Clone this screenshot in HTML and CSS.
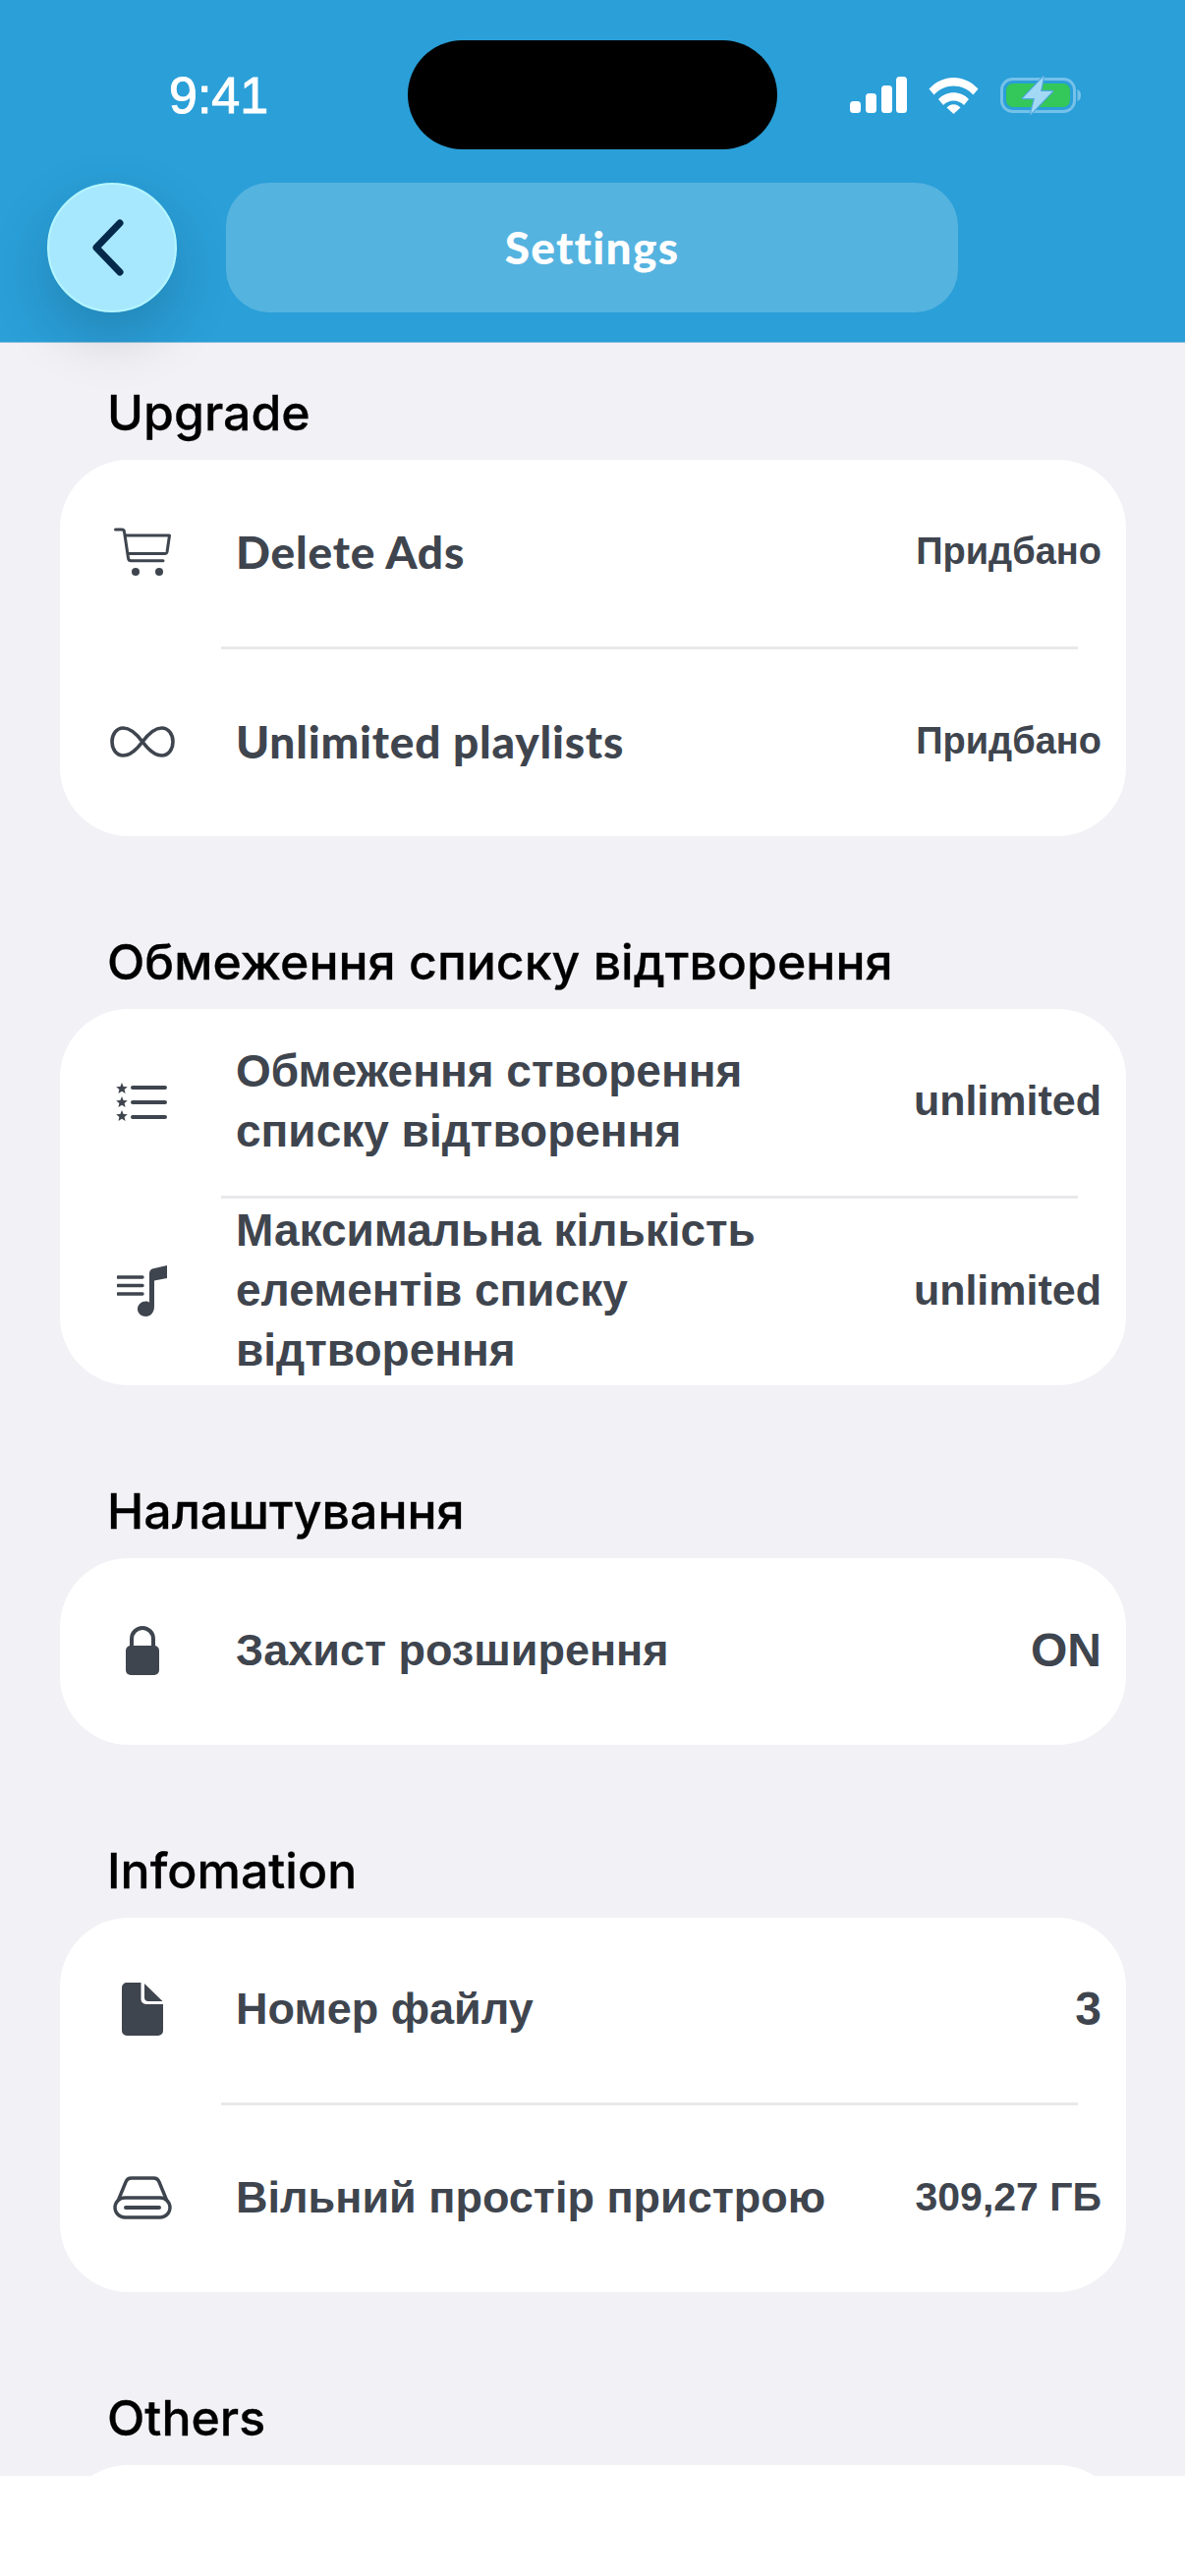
FILE: index.html
```html
<!DOCTYPE html>
<html lang="en">
<head>
  <meta charset="UTF-8">
  <meta name="viewport" content="width=device-width, initial-scale=1.0">
  <title>Settings</title>
  <link rel="stylesheet" href="styles.css">
</head>
<body>
  <div class="screen">
    <!-- Blue header with status bar and nav -->
    <header class="header">
      <div class="status-bar">
        <span class="clock">9:41</span>
        <div class="island"></div>
        <div class="status-icons">
          <svg class="icon-signal" width="58" height="37" viewBox="0 0 58 37">
            <rect x="0" y="25" width="11" height="12" rx="3.5"/>
            <rect x="16" y="17" width="11" height="20" rx="3.5"/>
            <rect x="32" y="9" width="11" height="28" rx="3.5"/>
            <rect x="47" y="0" width="11" height="37" rx="3.5"/>
          </svg>
          <svg class="icon-wifi" width="51" height="38" viewBox="0 0 51 38">
            <path d="M0.5 12.5 C14 -3 37 -3 50.5 12.5 L45.5 18.5 C34.5 6.5 16.5 6.5 5.5 18.5Z"/>
            <path d="M10 23 C18 14 33 14 41 23 L36 29 C30.5 23 20.5 23 15 29Z"/>
            <path d="M18.5 31.5 C22.5 27 28.5 27 32.5 31.5 L25.5 38Z"/>
          </svg>
          <svg class="icon-battery" width="82" height="40" viewBox="0 0 82 40">
            <rect x="1.5" y="3.5" width="74" height="33" rx="11" fill="none" stroke="#75c1e9" stroke-width="3"/>
            <rect x="6" y="8" width="65" height="24" rx="7" fill="#34c759"/>
            <path d="M78.5 14 C81 15 82 17 82 20 C82 23 81 25 78.5 26Z" fill="#75c1e9"/>
            <path d="M44 1 L23 23 H35 L31 39 L53 16 H41Z" fill="#a3d9f5" stroke="#4fa9de" stroke-width="2.5" stroke-linejoin="round" paint-order="stroke"/>
          </svg>
        </div>
      </div>
      <nav class="nav">
        <button class="back-btn" type="button">
          <svg width="34" height="58" viewBox="0 0 34 58">
            <path d="M29 4 L5 29 L29 54" fill="none" stroke="#04294a" stroke-width="7" stroke-linecap="round" stroke-linejoin="round"/>
          </svg>
        </button>
        <div class="title-pill">Settings</div>
      </nav>
    </header>

    <main class="content">
      <section class="section">
        <h2 class="section-title">Upgrade</h2>
        <div class="card">
          <div class="row">
            <div class="row-icon">
              <svg width="58" height="50" viewBox="0 0 58 50">
                <path d="M1.5 2 H8 a2.5 2.5 0 0 1 2.5 2.2 L14.5 31 a3 3 0 0 0 3 2.8 H50" fill="none" stroke="#3f454e" stroke-width="3" stroke-linecap="round"/>
                <path d="M11.5 8 H56.5 L54 25 a2 2 0 0 1 -2 1.5 H14" fill="none" stroke="#3f454e" stroke-width="3" stroke-linejoin="round"/>
                <circle cx="22" cy="45" r="4" fill="#3f454e"/>
                <circle cx="46" cy="45" r="4" fill="#3f454e"/>
              </svg>
            </div>
            <div class="row-label label-avenir">Delete Ads</div>
            <div class="row-value value-sm">Придбано</div>
          </div>
          <div class="divider"></div>
          <div class="row">
            <div class="row-icon">
              <svg width="66" height="32" viewBox="0 0 66 32">
                <path d="M33 16 C27 8 21 2 13.5 2 C6.5 2 2 8.5 2 16 C2 23.5 6.5 30 13.5 30 C21 30 27 24 33 16 C39 8 45 2 52.5 2 C59.5 2 64 8.5 64 16 C64 23.5 59.5 30 52.5 30 C45 30 39 24 33 16Z" fill="none" stroke="#3f454e" stroke-width="3.6"/>
              </svg>
            </div>
            <div class="row-label label-avenir">Unlimited playlists</div>
            <div class="row-value value-sm">Придбано</div>
          </div>
        </div>
      </section>

      <section class="section">
        <h2 class="section-title">Обмеження списку відтворення</h2>
        <div class="card">
          <div class="row">
            <div class="row-icon">
              <svg width="54" height="40" viewBox="0 0 54 40">
                <path d="M6 0 L7.6 3.9 L11.8 4.2 L8.6 6.9 L9.6 11 L6 8.8 L2.4 11 L3.4 6.9 L0.2 4.2 L4.4 3.9Z" fill="#3f454e" transform="translate(0 1)"/>
                <path d="M6 0 L7.6 3.9 L11.8 4.2 L8.6 6.9 L9.6 11 L6 8.8 L2.4 11 L3.4 6.9 L0.2 4.2 L4.4 3.9Z" fill="#3f454e" transform="translate(0 15)"/>
                <path d="M6 0 L7.6 3.9 L11.8 4.2 L8.6 6.9 L9.6 11 L6 8.8 L2.4 11 L3.4 6.9 L0.2 4.2 L4.4 3.9Z" fill="#3f454e" transform="translate(0 29)"/>
                <path d="M17 6 H50 M17 21 H50 M17 36 H50" stroke="#3f454e" stroke-width="4" stroke-linecap="round"/>
              </svg>
            </div>
            <div class="row-label label-wide">Обмеження створення списку відтворення</div>
            <div class="row-value value-md">unlimited</div>
          </div>
          <div class="divider"></div>
          <div class="row">
            <div class="row-icon">
              <svg width="52" height="52" viewBox="0 0 52 52">
                <path d="M1 12 H26 M1 20.5 H26 M1 29 H26" stroke="#3f454e" stroke-width="3.4" stroke-linecap="round"/>
                <path d="M33 8 C33 5 35 3.5 38 3 L51 0 V13 L38 15.5 V42 C38 48 34 52 29.5 52 C25 52 21 49 21 44.5 C21 40 25 36.5 29.5 36.5 C31 36.5 32 37 33 37.5Z" fill="#3f454e"/>
              </svg>
            </div>
            <div class="row-label label-wide">Максимальна кількість елементів списку відтворення</div>
            <div class="row-value value-md">unlimited</div>
          </div>
        </div>
      </section>

      <section class="section">
        <h2 class="section-title">Налаштування</h2>
        <div class="card">
          <div class="row">
            <div class="row-icon">
              <svg width="34" height="50" viewBox="0 0 34 50">
                <path d="M6 22 V13 a11 11 0 0 1 22 0 V22" fill="none" stroke="#3f454e" stroke-width="4"/>
                <rect x="0" y="20" width="34" height="30" rx="5" fill="#3f454e"/>
              </svg>
            </div>
            <div class="row-label">Захист розширення</div>
            <div class="row-value">ON</div>
          </div>
        </div>
      </section>

      <section class="section">
        <h2 class="section-title">Infomation</h2>
        <div class="card">
          <div class="row row-short">
            <div class="row-icon">
              <svg width="42" height="54" viewBox="0 0 42 54">
                <path d="M5 0 H19.5 V17 a5 5 0 0 0 5 5 H42 V49 a5 5 0 0 1 -5 5 H5 a5 5 0 0 1 -5 -5 V5 a5 5 0 0 1 5 -5Z" fill="#3f454e"/>
                <path d="M23 1 L41.5 19 H27 a4 4 0 0 1 -4 -4Z" fill="#3f454e"/>
              </svg>
            </div>
            <div class="row-label">Номер файлу</div>
            <div class="row-value">3</div>
          </div>
          <div class="divider"></div>
          <div class="row">
            <div class="row-icon">
              <svg width="60" height="44" viewBox="0 0 60 44">
                <path d="M3.5 29 L13 6 a6 6 0 0 1 5.5 -4 H41.5 a6 6 0 0 1 5.5 4 L56.5 29" fill="none" stroke="#3f454e" stroke-width="3.4" stroke-linejoin="round"/>
                <rect x="2" y="22" width="56" height="20" rx="10" fill="#fff" stroke="#3f454e" stroke-width="3.4"/>
                <path d="M13 32 H47" stroke="#3f454e" stroke-width="4" stroke-linecap="round"/>
              </svg>
            </div>
            <div class="row-label">Вільний простір пристрою</div>
            <div class="row-value value-md2">309,27 ГБ</div>
          </div>
        </div>
      </section>

      <section class="section">
        <h2 class="section-title">Others</h2>
        <div class="card card-cut"></div>
      </section>
    </main>

    <!-- Blank strip along the bottom edge -->
    <div class="bottom-strip"></div>
  </div>
</body>
</html>
```

FILE: styles.css
```css
/* Reset */
* {
  margin: 0;
  padding: 0;
  box-sizing: border-box;
}

body {
  background-color: #fff;
  font-family: "Liberation Sans", Arial, sans-serif;
}

.screen {
  display: flex;
  flex-direction: column;
  width: 1206px;
  height: 2622px;
  overflow: hidden;
}

/* Header */
.header {
  position: relative;
  z-index: 1;
  flex: none;
  height: 349px;
  padding-top: 41px;
  background-color: #2a9fd8;
  border-bottom: 1px solid #8fc0dc;
}

.status-bar {
  display: grid;
  grid-template-columns: 1fr 376px 1fr;
  align-items: center;
  height: 111px;
}

.clock {
  padding-left: 172px;
  color: #fff;
  font-size: 52px;
  -webkit-text-stroke: 1px #fff;
}

.island {
  height: 111px;
  background-color: #000;
  border-radius: 56px;
}

.status-icons {
  display: flex;
  align-items: center;
  justify-content: flex-end;
  gap: 22px;
  padding-right: 106px;
}

.icon-signal,
.icon-wifi {
  fill: #fff;
}

.nav {
  display: flex;
  gap: 50px;
  margin-top: 34px;
  padding-left: 48px;
}

.back-btn {
  display: flex;
  align-items: center;
  justify-content: center;
  width: 132px;
  height: 132px;
  padding-right: 8px;
  background-color: #a8e8ff;
  border: 2px solid #b4f6ff;
  border-radius: 50%;
  box-shadow: 0 24px 60px rgba(0, 0, 0, 0.17);
}

.title-pill {
  display: flex;
  align-items: center;
  justify-content: center;
  width: 745px;
  height: 132px;
  padding-bottom: 2px;
  background-color: #55b3e0;
  border-radius: 44px;
  color: #fff;
  font-family: Lato, sans-serif;
  font-size: 46px;
  font-weight: 900;
  letter-spacing: 1.3px;
}

/* Settings list */
.content {
  flex: 1;
  min-height: 0;
  overflow: hidden;
  background-color: #f1f1f6;
  padding: 41px 60px 0 61px;
}

.section {
  margin-bottom: 98px;
}

.section-title {
  height: 60px;
  margin-bottom: 18px;
  padding-left: 48px;
  color: #000;
  font-family: Inter, sans-serif;
  font-size: 50px;
  font-weight: 500;
  line-height: 60px;
  -webkit-text-stroke: 0.3px #000;
}

.card {
  background-color: #fff;
  border-radius: 70px;
}

.card-cut {
  height: 300px;
}

.row {
  display: flex;
  align-items: center;
  min-height: 190px;
  padding: 0 25px 3px 51px;
  color: #3f454e;
}

.row-short {
  min-height: 188px;
}

.row-icon {
  display: flex;
  flex: none;
  align-items: center;
  justify-content: center;
  width: 66px;
  margin-right: 62px;
}

.row-label {
  flex: 1;
  max-width: 640px;
  font-size: 45px;
  font-weight: 700;
  line-height: 61px;
}

.label-wide {
  font-size: 46px;
}

.label-avenir {
  font-family: Lato, sans-serif;
  font-size: 46px;
  font-weight: 900;
  letter-spacing: 0.8px;
}

.row-value {
  margin-left: auto;
  font-size: 48px;
  font-weight: 700;
  white-space: nowrap;
}

.value-sm {
  font-size: 38px;
}

.value-md {
  font-size: 43px;
}

.value-md2 {
  font-size: 41px;
}

.divider {
  height: 3px;
  margin: 0 49px 0 164px;
  background-color: #e9e9eb;
}

.bottom-strip {
  flex: none;
  height: 102px;
  background-color: #fff;
}
```
